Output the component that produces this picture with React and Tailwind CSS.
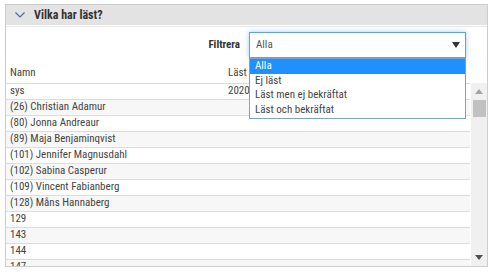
import React from "react";

const rows = [
  ["sys", "2020-03-12 14:22"],
  ["(26) Christian Adamur", ""],
  ["(80) Jonna Andreaur", ""],
  ["(89) Maja Benjaminqvist", ""],
  ["(101) Jennifer Magnusdahl", ""],
  ["(102) Sabina Casperur", ""],
  ["(109) Vincent Fabianberg", ""],
  ["(128) Måns Hannaberg", ""],
  ["129", ""],
  ["143", ""],
  ["144", ""],
  ["147", ""],
];

const options = ["Alla", "Ej läst", "Läst men ej bekräftat", "Läst och bekräftat"];

export default function App() {
  return (
    <div className="w-[498px] h-[277px] bg-white pt-[4px] pl-[5px] font-['Roboto_Condensed','Roboto',sans-serif] text-[11px] text-[#444] overflow-hidden">
      <div className="w-[483px] h-[263px] border border-[#cdcdcd] flex flex-col overflow-hidden">
        {/* header */}
        <div className="h-[20px] bg-[#e3e3e3] flex items-center pl-[9px] shrink-0">
          <svg width="10" height="6" viewBox="0 0 10 6" className="mr-[9px]">
            <path d="M0.5 0.5 L5 5 L9.5 0.5" fill="none" stroke="#4a6a94" strokeWidth="1.1" />
          </svg>
          <span className="font-bold text-[12px] text-[#333] leading-none">Vilka har läst?</span>
        </div>
        <div className="h-px bg-white shrink-0" />
        <div className="h-px bg-[#e6e6e6] shrink-0" />
        {/* body */}
        <div className="flex-1 min-h-0 flex flex-col">
          <div className="mt-[5px] flex items-center justify-end pr-[21px] relative shrink-0">
            <span className="font-bold text-[#333] mr-[9px]">Filtrera</span>
            <div className="w-[217px] h-[26px] border border-[#62a0e4] shadow-[0_0_5px_rgba(82,168,236,0.55)] bg-white flex items-center justify-between pl-[6px] pr-[5px] text-[#555]">
              <span>Alla</span>
              <svg width="8" height="6" viewBox="0 0 8 6">
                <path d="M0 0 H8 L4 6 Z" fill="#333" />
              </svg>
            </div>
            <div className="absolute top-full right-[21px] w-[217px] h-[61px] border border-[#7d9fd4] bg-white z-10 flex flex-col">
              {options.map((o, i) => (
                <div
                  key={o}
                  className={
                    i === 0
                      ? "h-[14.5px] flex items-center pl-[5px] bg-[#1e90ff] text-white"
                      : "h-[14.5px] flex items-center pl-[5px] text-[#444]"
                  }
                >
                  {o}
                </div>
              ))}
            </div>
          </div>
          <div className="h-[25px] flex items-end pb-[4px] leading-[13px] text-[#444] shrink-0">
            <div className="w-[222px] pl-[4px]">Namn</div>
            <div>Läst</div>
          </div>
          <div className="flex-1 min-h-0 flex overflow-hidden">
            <div className="w-[464px] border-t border-[#dcdcdc] overflow-hidden">
              {rows.map(([n, d], i) => (
                <div
                  key={n}
                  className={
                    i % 2 === 1
                      ? "h-[16px] border-b border-[#dcdcdc] bg-[#f7f7f7] flex items-center"
                      : "h-[16px] border-b border-[#dcdcdc] bg-white flex items-center"
                  }
                >
                  <div className="w-[222px] pl-[4px] whitespace-nowrap">{n}</div>
                  <div className="w-[21px] overflow-hidden whitespace-nowrap">{d}</div>
                </div>
              ))}
            </div>
            <div className="w-px" />
            <div className="w-[16px] bg-[#f0f0f0] flex flex-col items-center">
              <div className="h-[17px] flex items-center justify-center shrink-0">
                <svg width="8" height="5" viewBox="0 0 8 5">
                  <path d="M0 5 H8 L4 0 Z" fill="#a3a3a3" />
                </svg>
              </div>
              <div className="w-[13px] h-[17px] bg-[#c1c1c1] shrink-0" />
              <div className="flex-1" />
              <div className="h-[17px] flex items-center justify-center shrink-0">
                <svg width="8" height="5" viewBox="0 0 8 5">
                  <path d="M0 0 H8 L4 5 Z" fill="#505050" />
                </svg>
              </div>
            </div>
          </div>
        </div>
      </div>
    </div>
  );
}
